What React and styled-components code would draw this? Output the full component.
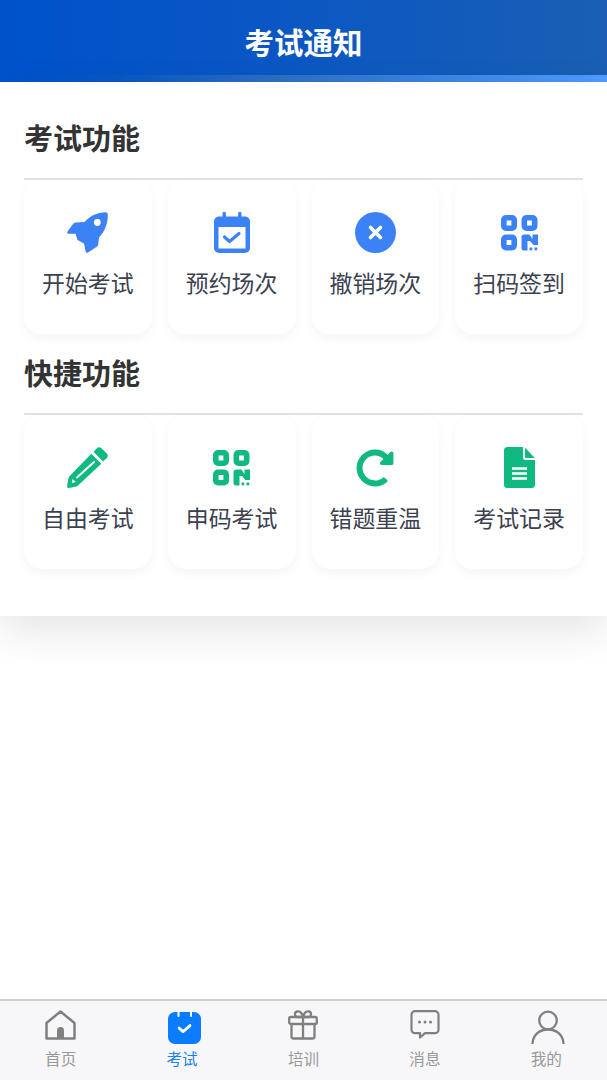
import styled, { createGlobalStyle } from 'styled-components';
import { FaRedoAlt } from 'react-icons/fa';

const GlobalStyle = createGlobalStyle`
  html, body { margin: 0; padding: 0; background: #fff; }
  body { font-family: "Noto Sans CJK SC", "Noto Sans", sans-serif; }
  * { box-sizing: border-box; }
`;

const Page = styled.div`
  width: 607px;
  height: 1080px;
  display: flex;
  flex-direction: column;
  background: #fff;
  overflow: hidden;
`;

const Header = styled.header`
  height: 82px;
  flex: none;
  display: flex;
  flex-direction: column;
  background: linear-gradient(90deg, #0052cc 0%, #0a57c4 45%, #1a5fb4 100%);
`;

const HeaderTitle = styled.h1`
  flex: 1;
  margin: 0;
  padding-top: 9px;
  display: flex;
  align-items: center;
  justify-content: center;
  color: #fff;
  font-size: 29.5px;
  font-weight: 700;
  line-height: 1;
`;

const HeaderStrip = styled.div`
  height: 7px;
  background: linear-gradient(90deg, #0052cc 0%, #0a57c4 20%, #2a70c4 45%, #4f9bff 100%);
`;

const Panel = styled.main`
  flex: none;
  padding: 37px 24px 47px;
  background: #fff;
  box-shadow: 0 14px 40px rgba(0, 0, 0, 0.11);
  position: relative;
`;

const Section = styled.section`
  & + & { margin-top: 20px; }
`;

const SectionTitle = styled.h2`
  margin: 0;
  height: 61px;
  padding-bottom: 19px;
  border-bottom: 2px solid #e2e2e2;
  color: #333;
  font-size: 29px;
  font-weight: 700;
  line-height: 36px;
`;

const Grid = styled.div`
  display: grid;
  grid-template-columns: repeat(4, 1fr);
  gap: 16px;
`;

const Card = styled.div`
  height: 154px;
  padding-top: 32px;
  display: flex;
  flex-direction: column;
  align-items: center;
  background: #fff;
  border-radius: 18px;
  box-shadow: 0 4px 12px rgba(0, 0, 0, 0.045);
`;

const IconBox = styled.div`
  height: 41px;
  display: flex;
  align-items: center;
  justify-content: center;
  color: ${(props) => props.color};
`;

const CardLabel = styled.div`
  margin-top: 14px;
  color: #3c4150;
  font-size: 22.9px;
  line-height: 30px;
`;

const TabBar = styled.nav`
  margin-top: auto;
  height: 81px;
  flex: none;
  display: grid;
  grid-template-columns: repeat(5, 1fr);
  background: #f7f7fa;
  border-top: 2px solid #d0d0d2;
`;

const Tab = styled.div`
  display: flex;
  flex-direction: column;
  align-items: center;
  color: ${(props) => (props.$active ? '#1a80f0' : '#999')};
`;

const TabIcon = styled.div`
  height: 35px;
  margin-top: 9px;
  display: flex;
  align-items: flex-start;
  justify-content: center;
`;

const TabLabel = styled.div`
  margin-top: 2px;
  font-size: 15.6px;
  line-height: 22px;
`;

const BLUE = '#3b82f6';
const GREEN = '#10b981';

const RocketIcon = () => (
  <svg width="41" height="41" viewBox="0 0 41 41">
    <path
      fill={BLUE}
      d="M38.500.2c1.500 0 2.300.8 2.300 2.300 0 8.500-2.300 16-8.800 23l-.8 7c-.2 1.200-.8 1.900-1.800 2.500l-8.400 5.500c-1.200.7-2.200.2-2.400-1.200L17 31.500 10.500 28l-2-6.300H2c-1.500 0-2.200-1-1.500-2.200L6 12c.7-1 1.500-1.500 2.800-1.600l8.700-.5C23.500 3.500 30.500.4 38.500.2z"
    />
    <circle cx="30.300" cy="10.500" r="3.400" fill="#fff" />
  </svg>
);

const CalendarIcon = () => (
  <svg width="36" height="41" viewBox="0 0 36 41">
    <path
      fill={BLUE}
      d="M9.500 0h1.400a1 1 0 0 1 1 1v3.500h12.200V1a1 1 0 0 1 1-1h1.400a1 1 0 0 1 1 1v3.500H31a5 5 0 0 1 5 5V36a5 5 0 0 1-5 5H5a5 5 0 0 1-5-5V9.500a5 5 0 0 1 5-5h3.500V1a1 1 0 0 1 1-1z"
    />
    <rect x="4.500" y="15" width="27" height="21.500" fill="#fff" />
    <path d="M10.500 25l5 4.500 9.500-8" fill="none" stroke={BLUE} strokeWidth="3.200" strokeLinecap="round" strokeLinejoin="round" />
  </svg>
);

const CancelIcon = () => (
  <svg width="41" height="41" viewBox="0 0 41 41">
    <circle cx="20.500" cy="20.500" r="20.500" fill={BLUE} />
    <path d="M15.500 15.500l10 10M25.500 15.500l-10 10" stroke="#fff" strokeWidth="3.600" strokeLinecap="round" />
  </svg>
);

const QrIcon = ({ color }) => (
  <svg width="37" height="36" viewBox="0 0 37 36">
    <g fill="none" stroke={color} strokeWidth="5.600">
      <rect x="2.800" y="2.800" width="10.400" height="10.400" rx="2.200" />
      <rect x="23.300" y="2.800" width="10.400" height="10.400" rx="2.200" />
      <rect x="2.800" y="22.300" width="10.400" height="10.400" rx="2.200" />
    </g>
    <path
      fill={color}
      d="M20.500 22a2.500 2.500 0 0 1 2.500-2.500h5.500l3 4.500v-4.500h5.500v10.500h-4.500l-3.500-4h-2.500V35.500H23a2.500 2.500 0 0 1-2.500-2.500z"
    />
    <rect x="28.500" y="32.500" width="2.800" height="2.800" fill={color} />
    <rect x="33.500" y="32.500" width="2.800" height="2.800" fill={color} />
  </svg>
);

const PencilIcon = () => (
  <svg width="41" height="41" viewBox="0 0 41 41">
    <path fill={GREEN} d="M26.500 4.800l3.400-3.600c1.400-1.400 3.200-1.400 4.600 0l5.300 5.300c1.400 1.400 1.400 3.200 0 4.600L36 14.500z" />
    <path fill={GREEN} d="M24.300 6.800l10 10L11 38.600c-.7.600-1.400 1-2.300 1.200l-7 1.100c-1 .2-1.800-.6-1.600-1.700l1.300-8c.1-.8.500-1.500 1.100-2z" />
    <path d="M27 15L10 30.500" stroke="#fff" strokeWidth="2" strokeLinecap="round" />
    <path d="M5.500 32l3.300 3-4 1z" fill="#fff" />
  </svg>
);

const FileIcon = () => (
  <svg width="31" height="41" viewBox="0 0 31 41">
    <path
      fill={GREEN}
      d="M3.500 0H19v10.500a2.500 2.500 0 0 0 2.500 2.500H31v24.500a3.500 3.500 0 0 1-3.500 3.500h-24A3.500 3.500 0 0 1 0 37.500v-34A3.500 3.500 0 0 1 3.500 0z"
    />
    <path fill={GREEN} d="M21 .5L30.800 11H22a1 1 0 0 1-1-1z" />
    <path d="M8 21.500h15M8 26.500h15M8 31.500h15" stroke="#fff" strokeWidth="2.400" />
  </svg>
);

const HomeIcon = () => (
  <svg width="31" height="30" viewBox="0 0 31 30">
    <path d="M1.500 13L15.500 1.500 29.500 13v15.500h-28z" fill="none" stroke="#808080" strokeWidth="2.500" strokeLinejoin="round" />
    <path d="M12 28.500V20.500a3.500 3.500 0 0 1 7 0v8z" fill="#808080" />
  </svg>
);

const ExamIcon = () => (
  <svg width="37" height="34" viewBox="-4 0 37 34">
    <rect x="0" y="2" width="33" height="32" rx="7" fill="#0a7cff" />
    <rect x="9.500" y="0" width="2" height="7" rx="1" fill="#fff" />
    <rect x="22" y="0" width="2" height="7" rx="1" fill="#fff" />
    <path d="M11 18l4 3.600 7-6" fill="none" stroke="#fff" strokeWidth="2.800" strokeLinecap="round" strokeLinejoin="round" />
  </svg>
);

const GiftIcon = () => (
  <svg width="30" height="30" viewBox="0 0 30 30">
    <g fill="none" stroke="#808080" strokeWidth="2.300" strokeLinejoin="round">
      <rect x="1.200" y="7" width="27.600" height="7" rx="1.500" />
      <path d="M3.500 14v12.500a2 2 0 0 0 2 2h19a2 2 0 0 0 2-2V14M15 7v21.500" />
      <path d="M15 7c-1-4-3.500-6-6-5.500S6 6 9 7zM15 7c1-4 3.500-6 6-5.500S24 6 21 7z" />
    </g>
  </svg>
);

const ChatIcon = () => (
  <svg width="30" height="29" viewBox="0 0 30 29">
    <path
      d="M5 1.200h20a3.500 3.500 0 0 1 3.500 3.500v15a3.500 3.500 0 0 1-3.500 3.500H15l-5 4.300v-4.300H5a3.500 3.500 0 0 1-3.500-3.500v-15A3.500 3.500 0 0 1 5 1.200z"
      fill="none"
      stroke="#808080"
      strokeWidth="2.200"
      strokeLinejoin="round"
    />
    <circle cx="9.500" cy="12" r="1.500" fill="#808080" />
    <circle cx="15" cy="12" r="1.500" fill="#808080" />
    <circle cx="20.500" cy="12" r="1.500" fill="#808080" />
  </svg>
);

const UserIcon = () => (
  <svg width="38" height="34" viewBox="-4 0 38 34">
    <circle cx="17" cy="10.500" r="8.800" fill="none" stroke="#808080" strokeWidth="2.300" />
    <path d="M1.500 33.500C2 25 8 19.500 17 19.500S32 25 32.500 33.500" fill="none" stroke="#808080" strokeWidth="2.300" strokeLinecap="round" />
  </svg>
);

const sections = [
  {
    title: '考试功能',
    items: [
      { label: '开始考试', icon: <RocketIcon />, color: BLUE },
      { label: '预约场次', icon: <CalendarIcon />, color: BLUE },
      { label: '撤销场次', icon: <CancelIcon />, color: BLUE },
      { label: '扫码签到', icon: <QrIcon color={BLUE} />, color: BLUE },
    ],
  },
  {
    title: '快捷功能',
    items: [
      { label: '自由考试', icon: <PencilIcon />, color: GREEN },
      { label: '申码考试', icon: <QrIcon color={GREEN} />, color: GREEN },
      { label: '错题重温', icon: <FaRedoAlt size={38} />, color: GREEN },
      { label: '考试记录', icon: <FileIcon />, color: GREEN },
    ],
  },
];

const tabs = [
  { label: '首页', icon: <HomeIcon /> },
  { label: '考试', icon: <ExamIcon />, active: true },
  { label: '培训', icon: <GiftIcon /> },
  { label: '消息', icon: <ChatIcon /> },
  { label: '我的', icon: <UserIcon /> },
];

const App = () => {
  return (
    <Page>
      <GlobalStyle />
      <Header>
        <HeaderTitle>考试通知</HeaderTitle>
        <HeaderStrip />
      </Header>
      <Panel>
        {sections.map((section) => (
          <Section key={section.title}>
            <SectionTitle>{section.title}</SectionTitle>
            <Grid>
              {section.items.map((item) => (
                <Card key={item.label}>
                  <IconBox color={item.color}>{item.icon}</IconBox>
                  <CardLabel>{item.label}</CardLabel>
                </Card>
              ))}
            </Grid>
          </Section>
        ))}
      </Panel>
      <TabBar>
        {tabs.map((tab) => (
          <Tab key={tab.label} $active={tab.active}>
            <TabIcon>{tab.icon}</TabIcon>
            <TabLabel>{tab.label}</TabLabel>
          </Tab>
        ))}
      </TabBar>
    </Page>
  );
};

export default App;
